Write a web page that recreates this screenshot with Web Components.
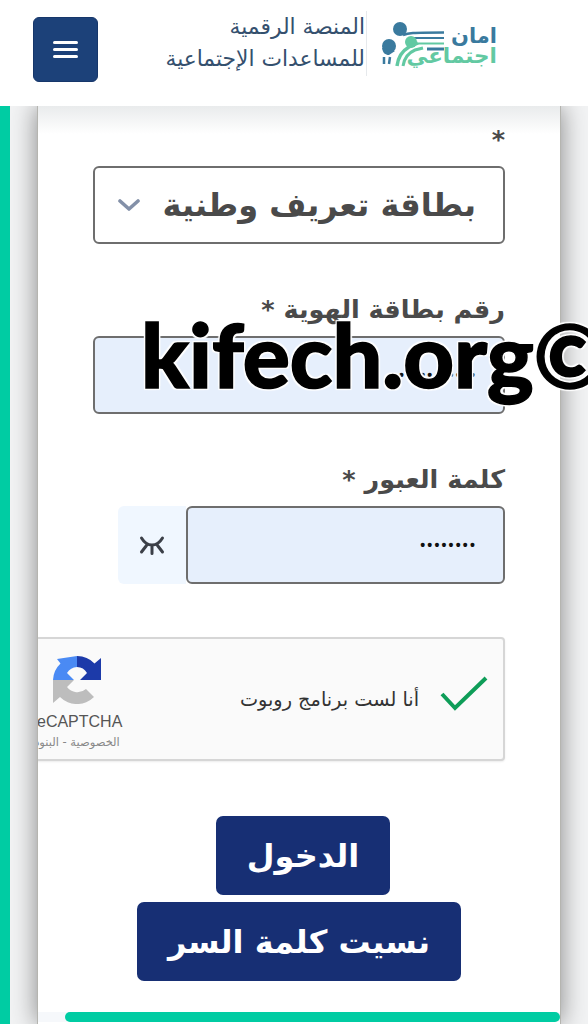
<!DOCTYPE html>
<html lang="ar" dir="rtl">
<head>
<meta charset="utf-8">
<title>kifech</title>
<style>
    html, body { margin: 0; padding: 0; height: 1024px; overflow: hidden; }
    body { background: #f2f3f4; font-family: "DejaVu Sans", sans-serif; position: relative; }
</style>
</head>
<body>
<app-header></app-header>
<page-shell>
    <login-card>
        <form-field label="*">
            <select-box>بطاقة تعريف وطنية</select-box>
        </form-field>
        <form-field label="رقم بطاقة الهوية *">
            <text-box value="•••••••••••"></text-box>
        </form-field>
        <form-field label="كلمة العبور *">
            <text-box value="••••••••" eye></text-box>
        </form-field>
        <captcha-box></captcha-box>
        <action-button>الدخول</action-button>
        <action-button>نسيت كلمة السر</action-button>
    </login-card>
</page-shell>
<water-mark>kifech.org©</water-mark>

<script>
// header with menu button and logo
class AppHeader extends HTMLElement {
    constructor() {
        super();
        this.attachShadow({mode: 'open'});
        this.shadowRoot.innerHTML = `
            <style>
                :host {
                    display: flex;
                    direction: ltr;
                    height: 106px;
                    background: #fff;
                    box-sizing: border-box;
                    padding: 17px 91px 0 33px;
                    position: relative;
                    z-index: 2;
                }
                .menu {
                    width: 65px;
                    height: 65px;
                    background: #1c4179;
                    border: 1px solid #16366a;
                    box-sizing: border-box;
                    border-radius: 6px;
                    display: flex;
                    flex-direction: column;
                    justify-content: center;
                    align-items: center;
                    gap: 4px;
                }
                .menu i {
                    display: block;
                    width: 25px;
                    height: 3px;
                    border-radius: 2px;
                    background: #fff;
                }
                .brand {
                    margin-left: auto;
                    display: flex;
                    height: 64px;
                    margin-top: -5px;
                }
                .title {
                    direction: rtl;
                    text-align: right;
                    font-size: 21.8px;
                    line-height: 32px;
                    color: #34506e;
                    white-space: nowrap;
                    padding-right: 1px;
                    border-right: 1px solid #e6e9ec;
                    margin-top: -1px;
                }
                .logo {
                    position: relative;
                    width: 130px;
                }
                svg { position: absolute; left: 3px; top: -2px; }
                .a, .b {
                    position: absolute;
                    right: 0;
                    direction: rtl;
                    font-weight: bold;
                    white-space: nowrap;
                    line-height: 1;
                }
                .a { top: 14px; font-size: 21px; color: #3a7a9e; }
                .b { top: 33px; font-size: 21.5px; color: #62c9a2; }
            </style>
            <div class="menu"><i></i><i></i><i></i></div>
            <div class="brand">
                <div class="title">المنصة الرقمية<br>للمساعدات الإجتماعية</div>
                <div class="logo">
                    <svg width="80" height="70" viewBox="370 10 80 70" fill="none">
                        <circle cx="400" cy="29" r="7" fill="#3a7a9e"/>
                        <circle cx="389" cy="46" r="7" fill="#3a7a9e"/>
                        <path d="M382 48c1 5 3 7 7 7l6-4z" fill="#3a7a9e"/>
                        <path d="M403 35c5-2 8-2.500 41-2.500" stroke="#3a7a9e" stroke-width="2.500"/>
                        <path d="M412 38h32" stroke="#3a7a9e" stroke-width="2"/>
                        <path d="M418 43.500h26" stroke="#62c9a2" stroke-width="2"/>
                        <path d="M427 49h17" stroke="#3a7a9e" stroke-width="3"/>
                        <circle cx="411" cy="42" r="6" fill="#62c9a2"/>
                        <path d="M397 66c1-8 5-15 12-19l9-4" stroke="#62c9a2" stroke-width="3.500"/>
                        <path d="M403 66c1-7 5-13 12-16l8-2" stroke="#62c9a2" stroke-width="3"/>
                        <path d="M384 57v7M390 57l-1 7" stroke="#3a7a9e" stroke-width="2.500"/>
                    </svg>
                    <span class="a">امان</span>
                    <span class="b">اجتماعي</span>
                </div>
            </div>
        `;
    }
}

// green strip and the column the card sits in
class PageShell extends HTMLElement {
    constructor() {
        super();
        this.attachShadow({mode: 'open'});
        this.shadowRoot.innerHTML = `
            <style>
                :host {
                    display: flex;
                    direction: ltr;
                    height: 918px;
                    overflow: hidden;
                }
                .strip { width: 10px; background: #00cca3; flex: none; position: relative; z-index: 1; }
                .col {
                    margin-left: 27px;
                    width: 524px;
                    flex: none;
                    box-shadow: 0 0 24px rgba(0,0,0,.45);
                    border-left: 1px solid #b5b5b0;
                    border-right: 1px solid #b5b5b0;
                    box-sizing: border-box;
                    background: #fff;
                    position: relative;
                }
                .fade {
                    position: absolute;
                    left: 0;
                    right: 0;
                    top: 0;
                    height: 28px;
                    background: linear-gradient(#e9ebec, #fff);
                }
            </style>
            <div class="strip"></div>
            <div class="col"><div class="fade"></div><slot></slot></div>
        `;
    }
}

class LoginCard extends HTMLElement {
    constructor() {
        super();
        this.attachShadow({mode: 'open'});
        this.shadowRoot.innerHTML = `
            <style>
                :host {
                    display: flex;
                    flex-direction: column;
                    height: 918px;
                    box-sizing: border-box;
                    padding: 19px 55px 0 55px;
                    direction: rtl;
                    position: relative;
                    overflow: hidden;
                }
                .bar {
                    position: absolute;
                    left: 0;
                    right: 0;
                    bottom: 2px;
                    height: 10px;
                    background: #f6f8fb;
                }
                .bar i {
                    display: block;
                    height: 10px;
                    margin-left: 27px;
                    background: #00cca3;
                    border-radius: 6px;
                }
            </style>
            <slot></slot>
            <div class="bar"><i></i></div>
        `;
    }
}

class FormField extends HTMLElement {
    constructor() {
        super();
        this.attachShadow({mode: 'open'});
        this.shadowRoot.innerHTML = `
            <style>
                :host {
                    display: block;
                    margin-bottom: 51px;
                }
                label {
                    display: block;
                    height: 41px;
                    line-height: 28px;
                    font-size: 25.5px;
                    font-weight: bold;
                    color: #4a4a4a;
                }
            </style>
            <label></label>
            <slot></slot>
        `;
    }
    connectedCallback() {
        this.shadowRoot.querySelector('label').textContent = this.getAttribute('label');
    }
}

class SelectBox extends HTMLElement {
    constructor() {
        super();
        this.attachShadow({mode: 'open'});
        this.shadowRoot.innerHTML = `
            <style>
                :host {
                    display: flex;
                    align-items: center;
                    height: 78px;
                    box-sizing: border-box;
                    border: 2px solid #6e6e6e;
                    border-radius: 6px;
                    padding: 0 27px 0 23px;
                    font-size: 32px;
                    font-weight: bold;
                    color: #4a4a4a;
                    background: #fff;
                }
                .txt { white-space: nowrap; }
                svg { margin-right: auto; }
            </style>
            <span class="txt"><slot></slot></span>
            <svg width="22" height="14" viewBox="0 0 22 14" fill="none">
                <path d="M2 3l9 8 9-8" stroke="#8390a8" stroke-width="3.600" stroke-linecap="round" stroke-linejoin="round"/>
            </svg>
        `;
    }
}

class TextBox extends HTMLElement {
    constructor() {
        super();
        this.attachShadow({mode: 'open'});
        this.shadowRoot.innerHTML = `
            <style>
                :host {
                    display: flex;
                    height: 78px;
                }
                .box {
                    flex: 1;
                    box-sizing: border-box;
                    border: 2px solid #6e6e6e;
                    border-radius: 6px;
                    background: #e6effc;
                    display: flex;
                    align-items: center;
                    padding: 0 26px;
                    font-family: "Liberation Sans", sans-serif;
                    font-size: 14px;
                    font-weight: bold;
                    letter-spacing: 2.200px;
                    color: #111;
                }
                .eye {
                    width: 68px;
                    margin-left: 25px;
                    background: #f0f7ff;
                    border-radius: 6px 0 0 6px;
                    display: flex;
                    align-items: center;
                    justify-content: center;
                    flex: none;
                }
            </style>
            <div class="box"></div>
        `;
    }
    connectedCallback() {
        this.shadowRoot.querySelector('.box').textContent = this.getAttribute('value');
        if (this.hasAttribute('eye')) {
            const eye = document.createElement('div');
            eye.className = 'eye';
            eye.innerHTML = `<svg width="26" height="20" viewBox="0 0 26 20" fill="none" stroke="#3c4048" stroke-width="3" stroke-linecap="round">
                <path d="M2.500 3c3 5 6.500 7 10.500 7s7.500-2 10.500-7"/>
                <path d="M2.500 17l5-6.500M23.500 17l-5-6.500M13 18.500v-7"/>
            </svg>`;
            this.shadowRoot.appendChild(eye);
        }
    }
}

class CaptchaBox extends HTMLElement {
    constructor() {
        super();
        this.attachShadow({mode: 'open'});
        this.shadowRoot.innerHTML = `
            <style>
                :host {
                    display: flex;
                    align-items: stretch;
                    direction: rtl;
                    box-sizing: border-box;
                    width: 480px;
                    height: 124px;
                    margin-top: 2px;
                    margin-bottom: 55px;
                    flex: none;
                    background: #fafafa;
                    border: 2px solid #d6d6d6;
                    border-radius: 4px;
                    box-shadow: 0 1px 2px rgba(0,0,0,.08);
                    align-self: flex-start;
                }
                .check { width: 84px; display: flex; align-items: center; justify-content: center; flex: none; padding-left: 6px; padding-bottom: 10px; box-sizing: border-box; }
                .txt {
                    font-size: 19.300px;
                    color: #333;
                    white-space: nowrap;
                    align-self: center;
                    margin-top: 1px;
                }
                .brand {
                    margin-right: auto;
                    width: 100px;
                    flex: none;
                    display: flex;
                    flex-direction: column;
                    align-items: center;
                    padding-top: 17px;
                    box-sizing: border-box;
                }
                .rc {
                    font-family: "Liberation Sans", sans-serif;
                    font-size: 16px;
                    color: #555;
                    margin-top: 8px;
                    line-height: 20px;
                    direction: ltr;
                }
                .terms {
                    font-size: 11.500px;
                    color: #888;
                    white-space: nowrap;
                    line-height: 16px;
                    margin-top: 2px;
                }
            </style>
            <div class="check">
                <svg width="48" height="36" viewBox="0 0 48 36" fill="none">
                    <path d="M2 18l13 14L46 2" stroke="#0e9d58" stroke-width="4"/>
                </svg>
            </div>
            <div class="txt">أنا لست برنامج روبوت</div>
            <div class="brand">
                <svg width="48" height="48" viewBox="0 0 48 48">
                    <path d="M24 0v11a13 13 0 0 0-10 6l7 7H0A24 24 0 0 1 7.500 7.500L4 3z" fill="#4a8af4"/>
                    <path d="M24 0A24 24 0 0 1 41.500 7.500L48 2v22H27l7-7a12 12 0 0 0-10-6z" fill="#1c3aa9"/>
                    <path d="M0 24h21l-7 7a13 13 0 0 0 19 2l8 8A24 24 0 0 1 7 41l-7 6z" fill="#bdbdbd"/>
                </svg>
                <div class="rc">reCAPTCHA</div>
                <div class="terms">الخصوصية - البنود</div>
            </div>
        `;
    }
}

class ActionButton extends HTMLElement {
    constructor() {
        super();
        this.attachShadow({mode: 'open'});
        this.shadowRoot.innerHTML = `
            <style>
                :host {
                    display: flex;
                    align-self: center;
                    align-items: center;
                    justify-content: center;
                    height: 79px;
                    padding: 0 31px;
                    margin-bottom: 7px;
                    background: #172f74;
                    color: #fff;
                    font-size: 32px;
                    font-weight: bold;
                    border-radius: 7px;
                    white-space: nowrap;
                }
                :host(:first-of-type) { margin-left: 8px; }
            </style>
            <slot></slot>
        `;
    }
}

// watermark lying over the form
class WaterMark extends HTMLElement {
    constructor() {
        super();
        this.attachShadow({mode: 'open'});
        this.shadowRoot.innerHTML = `
            <style>
                :host {
                    position: absolute;
                    left: 141px;
                    top: 302px;
                    direction: ltr;
                    font-family: "Lato", sans-serif;
                    font-weight: 900;
                    font-size: 88px;
                    line-height: 104px;
                    color: #000;
                    white-space: nowrap;
                    z-index: 5;
                    -webkit-text-stroke: 1.500px #000;
                    text-shadow: 0 0 3px #fff, 2px 2px 1px #fff, -2px -2px 1px #fff, 2px -2px 1px #fff, -2px 2px 1px #fff;
                }
            </style>
            <slot></slot>
        `;
    }
}

customElements.define('app-header', AppHeader);
customElements.define('page-shell', PageShell);
customElements.define('login-card', LoginCard);
customElements.define('form-field', FormField);
customElements.define('select-box', SelectBox);
customElements.define('text-box', TextBox);
customElements.define('captcha-box', CaptchaBox);
customElements.define('action-button', ActionButton);
customElements.define('water-mark', WaterMark);
</script>
</body>
</html>
